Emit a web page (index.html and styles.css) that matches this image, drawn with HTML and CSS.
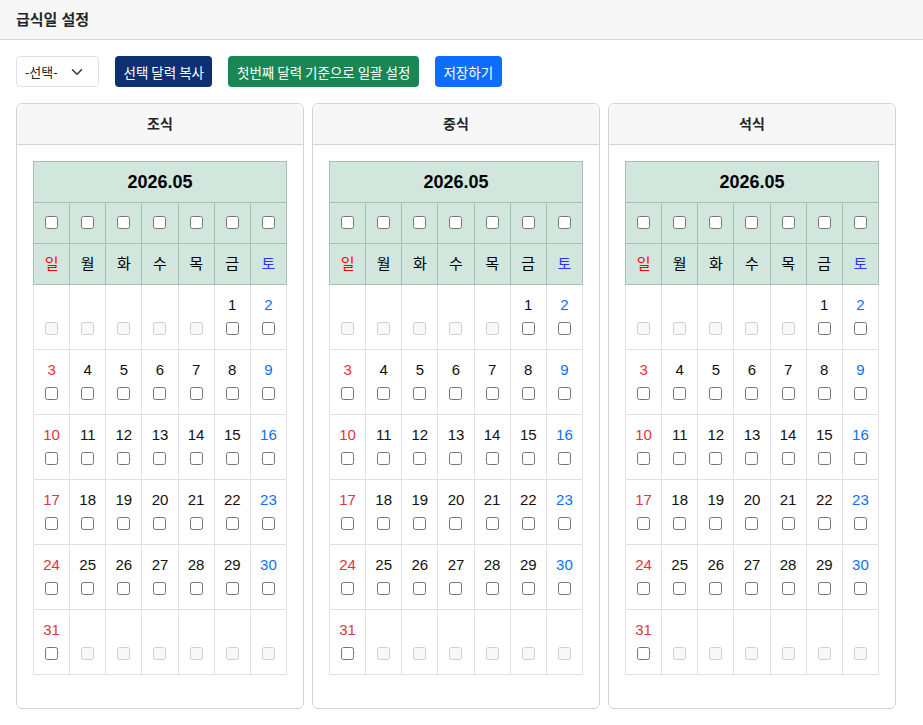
FILE: index.html
```html
<!DOCTYPE html>
<html lang="ko">
<head>
    <meta charset="UTF-8">
    <meta name="viewport" content="width=device-width, initial-scale=1.0">
    <title>급식일 설정</title>
    <link rel="stylesheet" href="styles.css">
</head>
<body>
    <div class="page-header">급식일 설정</div>

    <div class="toolbar">
        <div class="select-box">
            <span>-선택-</span>
            <svg width="12" height="8" viewBox="0 0 12 8"><path d="M1.5 1.8 6 6.2l4.5-4.4" fill="none" stroke="#343a40" stroke-width="1.6" stroke-linecap="round" stroke-linejoin="round"/></svg>
        </div>
        <button class="btn btn-navy">선택 달력 복사</button>
        <button class="btn btn-green">첫번째 달력 기준으로 일괄 설정</button>
        <button class="btn btn-blue">저장하기</button>
    </div>

    <div class="cards">
        <div class="card">
            <div class="card-header">조식</div>
            <div class="card-body"><table class="cal" data-month="2026.05"></table></div>
        </div>
        <div class="card">
            <div class="card-header">중식</div>
            <div class="card-body"><table class="cal" data-month="2026.05"></table></div>
        </div>
        <div class="card">
            <div class="card-header">석식</div>
            <div class="card-body"><table class="cal" data-month="2026.05"></table></div>
        </div>
    </div>

    <script src="script.js"></script>
</body>
</html>
```

FILE: styles.css
```css
body {
    margin: 0;
    font-family: "Liberation Sans", "Noto Sans CJK KR", sans-serif;
    color: #212529;
    background-color: #fff;
}

.page-header {
    height: 39px;
    line-height: 39px;
    padding: 0 16px;
    font-size: 15px;
    font-weight: bold;
    background-color: #f7f7f7;
    border-bottom: 1px solid #d3d3d3;
}

.toolbar {
    display: flex;
    gap: 16px;
    padding: 16px 16px 0;
}

.select-box {
    display: flex;
    align-items: center;
    justify-content: space-between;
    box-sizing: border-box;
    width: 83px;
    height: 31px;
    padding: 0 15px 0 8px;
    font-size: 13px;
    border: 1px solid #dee2e6;
    border-radius: 4px;
}

.btn {
    height: 31px;
    padding: 0 8.5px;
    font-family: "Noto Sans CJK KR", sans-serif;
    font-size: 13.5px;
    word-spacing: -0.8px;
    color: #fff;
    border: none;
    border-radius: 4px;
}

.btn-navy {
    background-color: #0f2f73;
}

.btn-green {
    background-color: #198754;
}

.btn-blue {
    background-color: #0d6efd;
}

.cards {
    display: flex;
    gap: 8px;
    padding: 16px 16px 0;
}

.card {
    box-sizing: border-box;
    width: 288px;
    border: 1px solid #d3d3d3;
    border-radius: 6px;
    overflow: hidden;
}

.card-header {
    height: 40px;
    line-height: 40px;
    text-align: center;
    font-size: 14px;
    font-weight: bold;
    background-color: #f7f7f7;
    border-bottom: 1px solid #d3d3d3;
}

.card-body {
    padding: 16px 16px 33px;
}

.cal {
    width: 100%;
    table-layout: fixed;
    border-collapse: collapse;
}

.cal td,
.cal th {
    padding: 8px 0;
    line-height: 24px;
    text-align: center;
    vertical-align: top;
    border: 1px solid #dee2e6;
    font-size: 15px;
    color: #111;
}

.cal thead th {
    background-color: #d1e7dd;
    border-color: #a9bdb3;
    color: #000;
    font-weight: normal;
}

.cal thead .month {
    font-size: 18px;
    font-weight: bold;
}

.cal .check-line {
    box-sizing: border-box;
    height: 24px;
    padding-top: 5px;
}

.cal input {
    display: block;
    margin: 0 auto;
}

.cal .wd-sun {
    color: #ff0000;
}

.cal .wd-sat {
    color: #3333ff;
}

.cal .sun {
    color: #dc3545;
}

.cal .sat {
    color: #0d6efd;
}
```

FILE: script.js
```js
const WEEKDAYS = ["일", "월", "화", "수", "목", "금", "토"];

document.querySelectorAll('.cal').forEach(function (table) {
    const [year, month] = table.dataset.month.split('.').map(Number);
    const firstDay = new Date(year, month - 1, 1).getDay();
    const lastDate = new Date(year, month, 0).getDate();

    let html = '<thead>';
    html += '<tr><th colspan="7" class="month">' + table.dataset.month + '</th></tr>';
    html += '<tr>' + WEEKDAYS.map(() => '<th><div class="check-line"><input type="checkbox"></div></th>').join('') + '</tr>';
    html += '<tr>' + WEEKDAYS.map((w, i) => {
        const cls = i === 0 ? 'wd-sun' : i === 6 ? 'wd-sat' : '';
        return '<th class="' + cls + '">' + w + '</th>';
    }).join('') + '</tr>';
    html += '</thead><tbody>';

    const cells = Math.ceil((firstDay + lastDate) / 7) * 7;
    for (let i = 0; i < cells; i++) {
        if (i % 7 === 0) html += '<tr>';
        const date = i - firstDay + 1;
        const cls = i % 7 === 0 ? 'sun' : i % 7 === 6 ? 'sat' : '';
        if (date < 1 || date > lastDate) {
            html += '<td><div>&nbsp;</div><div class="check-line"><input type="checkbox" disabled></div></td>';
        } else {
            html += '<td class="' + cls + '"><div>' + date + '</div><div class="check-line"><input type="checkbox"></div></td>';
        }
        if (i % 7 === 6) html += '</tr>';
    }
    html += '</tbody>';

    table.innerHTML = html;
});
```
